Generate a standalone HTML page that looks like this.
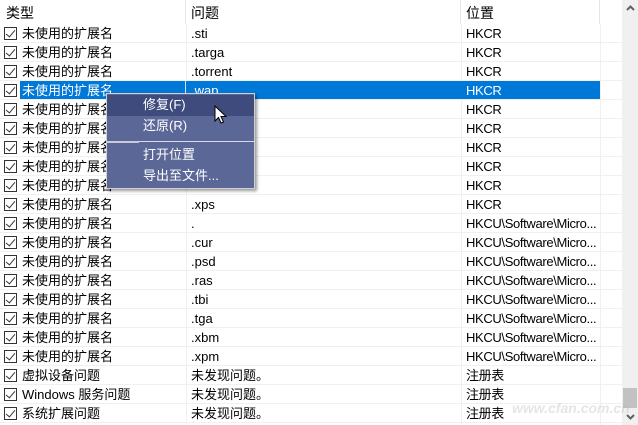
<!DOCTYPE html>
<html><head><meta charset="utf-8"><style>
*{margin:0;padding:0;box-sizing:border-box}
body{width:638px;height:425px;overflow:hidden;background:#fff;position:relative;font-family:"Liberation Sans","Microsoft YaHei","Noto Sans CJK SC",sans-serif;font-size:13px;color:#000}
.h{position:absolute;top:3px;font-size:14px}
.vs{position:absolute;top:0;width:1px;height:24px;background:#e5e5e5}
.r{position:absolute;left:0;width:622px;height:19px;border-bottom:1px solid #f0f0f0}
.r span{position:absolute;top:1px;line-height:17px;white-space:nowrap}
.c1{left:22px}.c2{left:191px}.c3{left:466px;letter-spacing:-0.35px}
.cb{position:absolute;left:4px;top:3px;width:13px;height:13px;border:1px solid #333;background:#fff}
.cb:after{content:"";position:absolute;left:3px;top:0px;width:4px;height:8px;border-right:1.5px solid #333;border-bottom:1.5px solid #333;transform:rotate(40deg)}
.cl{position:absolute;top:24px;width:1px;height:401px;background:#f0f0f0}
.sel .sb{position:absolute;left:20px;top:0;width:580px;height:18px;background:#0078d7}
.sel span{color:#fff}
.menu{position:absolute;left:106px;top:93px;width:149px;height:96px;background:#5b6796;border:1px solid #d0d0d0;box-shadow:2px 2px 3px rgba(0,0,0,.4);color:#fff}
.mi{position:absolute;left:0;width:147px;padding-left:36px;line-height:20px}
</style></head><body>
<div class="h" style="left:6px">类型</div>
<div class="h" style="left:191px">问题</div>
<div class="h" style="left:466px">位置</div>
<div class="vs" style="left:185px"></div>
<div class="vs" style="left:460px"></div>
<div class="vs" style="left:599px"></div>
<div class="cl" style="left:186px"></div>
<div class="cl" style="left:461px"></div>
<div class="cl" style="left:600px"></div>

<div class="r" style="top:24px"><i class="cb"></i><span class="c1">未使用的扩展名</span><span class="c2">.sti</span><span class="c3">HKCR</span></div>
<div class="r" style="top:43px"><i class="cb"></i><span class="c1">未使用的扩展名</span><span class="c2">.targa</span><span class="c3">HKCR</span></div>
<div class="r" style="top:62px"><i class="cb"></i><span class="c1">未使用的扩展名</span><span class="c2">.torrent</span><span class="c3">HKCR</span></div>
<div class="r sel" style="top:81px"><div class="sb"></div><div style="position:absolute;left:185px;top:0;width:1px;height:18px;background:#cfe3f5"></div><i class="cb"></i><span class="c1">未使用的扩展名</span><span class="c2">.wap</span><span class="c3">HKCR</span></div>
<div class="r" style="top:100px"><i class="cb"></i><span class="c1">未使用的扩展名</span><span class="c3">HKCR</span></div>
<div class="r" style="top:119px"><i class="cb"></i><span class="c1">未使用的扩展名</span><span class="c3">HKCR</span></div>
<div class="r" style="top:138px"><i class="cb"></i><span class="c1">未使用的扩展名</span><span class="c3">HKCR</span></div>
<div class="r" style="top:157px"><i class="cb"></i><span class="c1">未使用的扩展名</span><span class="c3">HKCR</span></div>
<div class="r" style="top:176px"><i class="cb"></i><span class="c1">未使用的扩展名</span><span class="c3">HKCR</span></div>
<div class="r" style="top:195px"><i class="cb"></i><span class="c1">未使用的扩展名</span><span class="c2">.xps</span><span class="c3">HKCR</span></div>
<div class="r" style="top:214px"><i class="cb"></i><span class="c1">未使用的扩展名</span><span class="c2">.</span><span class="c3">HKCU\Software\Micro...</span></div>
<div class="r" style="top:233px"><i class="cb"></i><span class="c1">未使用的扩展名</span><span class="c2">.cur</span><span class="c3">HKCU\Software\Micro...</span></div>
<div class="r" style="top:252px"><i class="cb"></i><span class="c1">未使用的扩展名</span><span class="c2">.psd</span><span class="c3">HKCU\Software\Micro...</span></div>
<div class="r" style="top:271px"><i class="cb"></i><span class="c1">未使用的扩展名</span><span class="c2">.ras</span><span class="c3">HKCU\Software\Micro...</span></div>
<div class="r" style="top:290px"><i class="cb"></i><span class="c1">未使用的扩展名</span><span class="c2">.tbi</span><span class="c3">HKCU\Software\Micro...</span></div>
<div class="r" style="top:309px"><i class="cb"></i><span class="c1">未使用的扩展名</span><span class="c2">.tga</span><span class="c3">HKCU\Software\Micro...</span></div>
<div class="r" style="top:328px"><i class="cb"></i><span class="c1">未使用的扩展名</span><span class="c2">.xbm</span><span class="c3">HKCU\Software\Micro...</span></div>
<div class="r" style="top:347px"><i class="cb"></i><span class="c1">未使用的扩展名</span><span class="c2">.xpm</span><span class="c3">HKCU\Software\Micro...</span></div>
<div class="r" style="top:366px"><i class="cb"></i><span class="c1">虚拟设备问题</span><span class="c2">未发现问题。</span><span class="c3">注册表</span></div>
<div class="r" style="top:385px"><i class="cb"></i><span class="c1">Windows 服务问题</span><span class="c2">未发现问题。</span><span class="c3">注册表</span></div>
<div class="r" style="top:404px"><i class="cb"></i><span class="c1">系统扩展问题</span><span class="c2">未发现问题。</span><span class="c3">注册表</span></div>

<div style="position:absolute;left:622px;top:0;width:16px;height:425px;background:#f0f0f0"></div>
<svg style="position:absolute;left:626px;top:5px" width="9" height="7"><path d="M1 5L4.5 1.5L8 5" stroke="#606060" stroke-width="2" fill="none"/></svg>
<div style="position:absolute;left:623px;top:388px;width:14px;height:20px;background:#c2c2c2"></div>
<svg style="position:absolute;left:626px;top:413px" width="9" height="7"><path d="M1 2L4.5 5.5L8 2" stroke="#606060" stroke-width="2" fill="none"/></svg>
<div style="position:absolute;left:512px;top:400px;font:italic bold 14px 'Liberation Sans',sans-serif;color:rgba(180,180,180,.35);white-space:nowrap">www.cfan.com.cn</div>

<div class="menu">
<div class="mi" style="top:1px;height:21px;background:#3e4b7c">修复(F)</div>
<div class="mi" style="top:22px;height:21px">还原(R)</div>
<div style="position:absolute;left:0;top:47px;width:32px;height:2px;background:#c8ccd8"></div>
<div style="position:absolute;left:32px;top:47px;width:115px;height:1px;background:#d8dae4"></div>
<div class="mi" style="top:51px">打开位置</div>
<div class="mi" style="top:72px">导出至文件...</div>
</div>
<svg style="position:absolute;left:214px;top:105px" width="14" height="22"><path d="M1 1L1 16L4.5 12.5L7 18L9.5 17L7 11.5L12 11.5Z" fill="#fff" stroke="#000" stroke-width="1"/></svg>
</body></html>
